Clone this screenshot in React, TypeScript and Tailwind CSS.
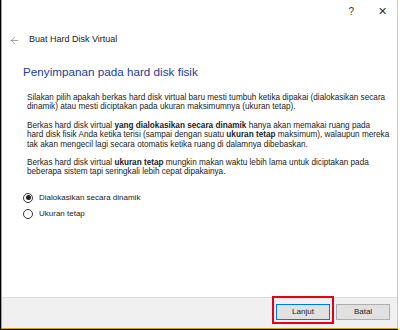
import { ArrowLeft } from 'lucide-react';

const body = "font-['Liberation_Sans',Arial,sans-serif]";

function Radio({ checked, label }: { checked?: boolean; label: string }) {
  return (
    <div className="flex items-center h-[16px]">
      <span className="w-[10px] h-[10px] rounded-full border border-[#333] bg-white flex items-center justify-center">
        {checked && <span className="w-[5px] h-[5px] rounded-full bg-[#222]" />}
      </span>
      <span className="ml-[6px] text-[8px] text-[#222]">{label}</span>
    </div>
  );
}

export default function App() {
  return (
    <div className={`w-[400px] h-[330px] bg-white ${body}`}>
      <div className="w-[398px] h-[330px] border-l border-b border-black">
        <div className="h-full flex flex-col border-l border-b border-r border-l-[#d4a020] border-b-[#d4a020] border-r-[#e6c48c] bg-white">
          {/* title bar */}
          <div className="h-[22px] flex items-center justify-end pr-[10px] text-[#333]">
            <span className="text-[10px] mr-[24px]">?</span>
            <span className="text-[11px] font-light">✕</span>
          </div>

          {/* back row */}
          <div className="h-[20px] mt-[8px] flex items-center pl-[7px]">
            <ArrowLeft size={11} strokeWidth={1.3} className="text-[#666]" />
            <span className="ml-[9px] text-[9px] text-[#222]">Buat Hard Disk Virtual</span>
          </div>

          {/* content */}
          <div className="flex-1 flex flex-col pl-[21px] pr-[10px]">
            <h1 className="mt-[14px] text-[11.7px] leading-[16px] text-[#233b96]">
              Penyimpanan pada hard disk fisik
            </h1>
            <div className="mt-[13px] pl-[4px] text-[8.2px] leading-[9.4px] text-[#222] whitespace-nowrap flex flex-col gap-[9px]">
              <p>
                Silakan pilih apakah berkas hard disk virtual baru mesti tumbuh ketika dipakai (dialokasikan secara
                <br />
                dinamik) atau mesti diciptakan pada ukuran maksimumnya (ukuran tetap).
              </p>
              <p>
                Berkas hard disk virtual <b>yang dialokasikan secara dinamik</b> hanya akan memakai ruang pada
                <br />
                hard disk fisik Anda ketika terisi (sampai dengan suatu <b>ukuran tetap</b> maksimum), walaupun mereka
                <br />
                tak akan mengecil lagi secara otomatis ketika ruang di dalamnya dibebaskan.
              </p>
              <p>
                Berkas hard disk virtual <b>ukuran tetap</b> mungkin makan waktu lebih lama untuk diciptakan pada
                <br />
                beberapa sistem tapi seringkali lebih cepat dipakainya.
              </p>
            </div>
            <div className="mt-[13px] flex flex-col">
              <Radio checked label="Dialokasikan secara dinamik" />
              <Radio label="Ukuran tetap" />
            </div>
          </div>

          {/* footer */}
          <div className="h-[31px] bg-[#f0f0f0] border-t border-[#dcdcdc] flex items-start pt-[6px] justify-end gap-[6px] pr-[7px]">
            <div className="relative flex">
              <button className="w-[54px] h-[16px] bg-[#e1e1e1] border border-[#0078d7] text-[8px] leading-[14px] text-[#222]">
                Lanjut
              </button>
              <span className="absolute -left-[4px] -right-[4px] -top-[8px] -bottom-[4px] border-2 border-[#e3001b]" />
            </div>
            <button className="w-[54px] h-[16px] bg-[#e1e1e1] border border-[#adadad] text-[8px] leading-[14px] text-[#222]">
              Batal
            </button>
          </div>
        </div>
      </div>
    </div>
  );
}
